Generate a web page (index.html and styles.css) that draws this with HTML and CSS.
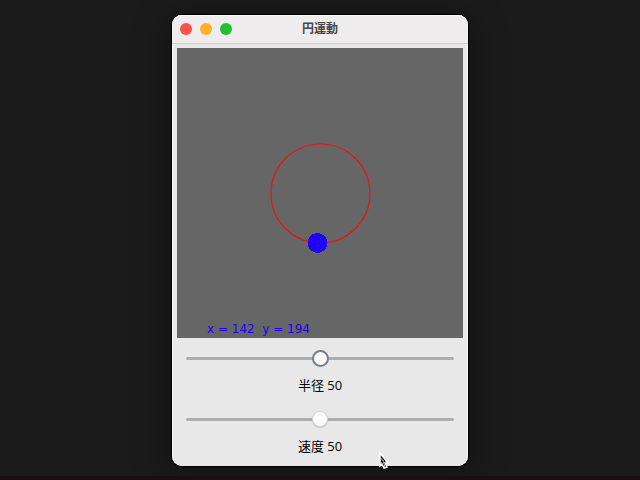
FILE: index.html
```html
<!DOCTYPE html>
<html lang="ja">
<head>
<meta charset="utf-8">
<title>円運動</title>
<link rel="stylesheet" href="styles.css">
</head>
<body>
<main class="window">
  <header class="titlebar">
    <div class="lights">
      <button class="light close" type="button" aria-label="閉じる"></button>
      <button class="light minimize" type="button" aria-label="最小化"></button>
      <button class="light maximize" type="button" aria-label="拡大"></button>
    </div>
    <h1 class="title">円運動</h1>
  </header>
  <div class="content">
    <svg class="stage" viewBox="0 0 286 290">
      <circle cx="143.500" cy="145.500" r="49.500" fill="none" stroke="#f01010" stroke-width="1.200"/>
      <circle cx="140.500" cy="195" r="10" fill="#2000ff" shape-rendering="crispEdges"/>
      <text class="coords" x="30" y="285" xml:space="preserve">x = 142  y = 194</text>
    </svg>
    <div class="control">
      <input class="slider focused" id="radius" type="range" min="0" max="100" value="50">
      <label class="caption" for="radius">半径 50</label>
    </div>
    <div class="control">
      <input class="slider" id="speed" type="range" min="0" max="100" value="50">
      <label class="caption" for="speed">速度 50</label>
    </div>
  </div>
  <svg class="pointer" viewBox="0 0 12 18" width="12" height="18" aria-hidden="true">
    <path d="M2 1V14L4 12L6 16L9 15L7 11H10Z" fill="#111" stroke="#fff" stroke-width="1.500"/>
    <path d="M3 7h1M5 9h1M3 11h1M5 11h1M6 13h1M7 9h1M4 8h1M6 14h1" stroke="#fff"/>
  </svg>
</main>
</body>
</html>
```
FILE: styles.css
```css
* {
  box-sizing: border-box;
}

body {
  margin: 0;
  min-height: 100vh;
  padding: 15px 172px 0;
  background: #1b1b1b;
  border-bottom: 4px solid #170f13;
  font-family: "Liberation Sans", "Noto Sans CJK JP", sans-serif;
}

.window {
  position: relative;
  background: #e8e8e8;
  border-radius: 10px;
  box-shadow: 0 0 1px 1px #000, 0 8px 36px 6px rgba(0, 0, 0, 0.3), inset 1px 0 #f8f8f8, inset -1px 0 #f8f8f8;
}

.titlebar {
  display: grid;
  grid-template-columns: 1fr auto 1fr;
  align-items: center;
  height: 29px;
  padding: 0 8px;
  background: #efeced;
  border-bottom: 1px solid #cfcfcf;
  border-radius: 10px 10px 0 0;
  box-shadow: inset 0 1px #fafafa;
}

.lights {
  display: flex;
  gap: 8px;
}

.light {
  width: 12px;
  height: 12px;
  padding: 0;
  border: 0;
  border-radius: 50%;
}

.close {
  background: #ff524a;
}

.minimize {
  background: #fdb125;
}

.maximize {
  background: #20c031;
}

.title {
  margin: 0;
  color: #484647;
  font-size: 12px;
  line-height: 16px;
  font-weight: 700;
}

.content {
  padding: 4px 5px 6px;
}

.stage {
  display: block;
  width: 100%;
  background: #666;
}

.coords {
  fill: #2200f0;
  font: 12px "DejaVu Sans", sans-serif;
  white-space: pre;
}

.control {
  display: flex;
  flex-direction: column;
  align-items: stretch;
  gap: 9px;
  padding: 12px 9px 5px;
}

.slider {
  appearance: none;
  width: 100%;
  height: 17px;
  margin: 0;
  background: transparent;
}

.slider::-webkit-slider-runnable-track {
  height: 3px;
  border-radius: 2px;
  background: #adadad;
}

.slider::-webkit-slider-thumb {
  appearance: none;
  width: 16px;
  height: 16px;
  margin-top: -7px;
  border: 1px solid #d4d4d4;
  border-radius: 50%;
  background: #fbfbfb;
  box-shadow: 0 1px 1px rgba(0, 0, 0, 0.15);
}

.focused::-webkit-slider-thumb {
  width: 17px;
  height: 17px;
  border: 2px solid #718090;
  box-shadow: none;
}

.caption {
  color: #000;
  font-family: "Open Sans", "Noto Sans CJK JP", sans-serif;
  font-size: 13px;
  line-height: 18px;
  text-align: center;
}

.pointer {
  position: absolute;
  right: 78px;
  bottom: -4px;
}
```
